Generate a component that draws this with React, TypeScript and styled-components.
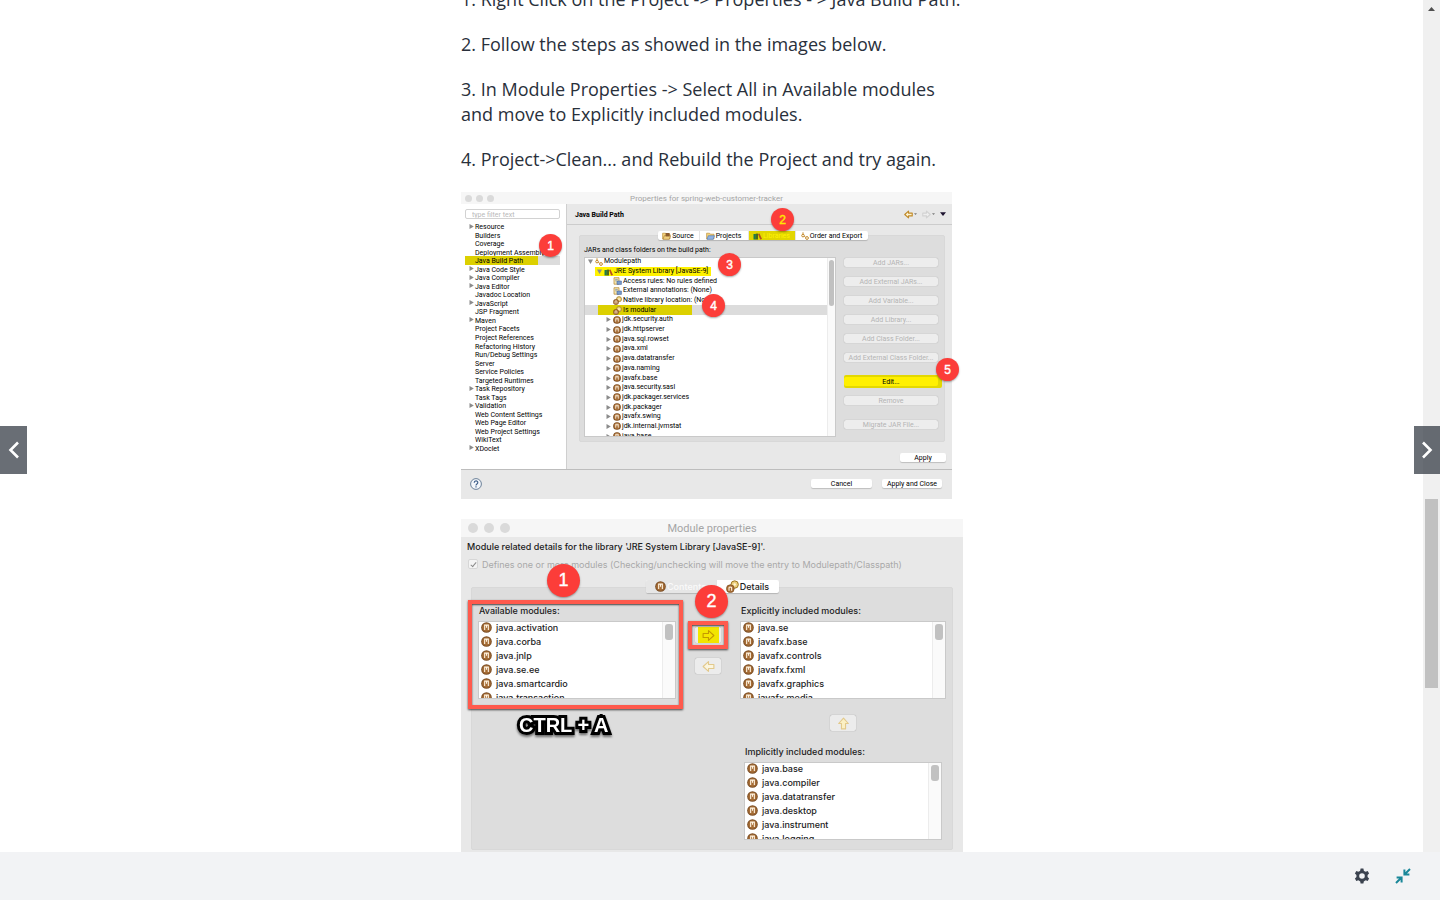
import React from "react";
import styled, { createGlobalStyle, css } from "styled-components";

const GlobalStyle = createGlobalStyle`
  *, *::before, *::after { box-sizing: border-box; }
  body { margin: 0; background: #fff; color: #29303b; font-family: "Open Sans", "Liberation Sans", sans-serif; }
  p, ul, h2, h3 { margin: 0; padding: 0; }
  ul { list-style: none; }
  button, input { font: inherit; color: inherit; margin: 0; padding: 0; border: 0; }
`;

const compactFont = `Roboto, "Liberation Sans", sans-serif`;
const uiFont = `Inter, "Liberation Sans", sans-serif`;

/* ---------- page shell ---------- */

const Shell = styled.div`
  position: relative;
  display: flex;
  flex-direction: column;
  height: 100vh;
  overflow: hidden;
`;

const Viewport = styled.div`
  display: flex;
  flex: 1;
  min-height: 0;
`;

const Reader = styled.main`
  flex: 1;
  min-width: 0;
  overflow: hidden;
`;

const Article = styled.article`
  display: flex;
  flex-direction: column;
  align-items: flex-start;
  gap: 20px;
  max-width: 501px;
  margin: -13px auto 0;
`;

const Step = styled.p`
  font-size: 18px;
  line-height: 25px;
`;

const ScrollTrack = styled.div`
  display: grid;
  grid-template-rows: 499fr 189fr 164fr;
  width: 17px;
  padding: 0 2px;
  background: #f0f0f0;
`;

const ScrollArrow = styled.svg`
  width: 7px;
  height: 4px;
  margin: 7px 3px 0;
`;

const ScrollThumb = styled.div`
  background: #c1c1c1;
`;

const BottomBar = styled.footer`
  display: flex;
  align-items: center;
  justify-content: flex-end;
  gap: 25px;
  height: 48px;
  padding-right: 29px;
  background: #f2f3f5;
`;

const IconButton = styled.button`
  display: flex;
  background: none;
  cursor: pointer;
`;

const PageButton = styled.button<{ $side: "left" | "right" }>`
  position: absolute;
  top: 50%;
  ${(p) => p.$side}: 0;
  transform: translateY(-50%);
  display: flex;
  align-items: center;
  justify-content: center;
  width: ${(p) => (p.$side === "left" ? 27 : 26)}px;
  height: 48px;
  background: rgba(41, 48, 59, 0.7);
  cursor: pointer;
`;

/* ---------- shared dialog parts ---------- */

const Dialog = styled.section<{ $width: number; $compact?: boolean }>`
  position: relative;
  flex: none;
  width: ${(p) => p.$width}px;
  font-family: ${(p) => (p.$compact ? compactFont : uiFont)};
  font-size: ${(p) => (p.$compact ? 7 : 9)}px;
  font-weight: ${(p) => (p.$compact ? 400 : 500)};
  color: ${(p) => (p.$compact ? "#000" : "#1c1c1c")};
  background: #e8e8e8;
`;

const TitleBar = styled.header<{ $large?: boolean }>`
  display: grid;
  grid-template-columns: 1fr auto 1fr;
  align-items: center;
  height: ${(p) => (p.$large ? 18 : 12)}px;
  padding: 0 ${(p) => (p.$large ? 7 : 4)}px;
  background: #f6f6f6;
`;

const DialogTitle = styled.h2<{ $large?: boolean }>`
  padding-top: ${(p) => (p.$large ? 2 : 1)}px;
  font-family: ${compactFont};
  font-size: ${(p) => (p.$large ? 11 : 8)}px;
  line-height: 12px;
  font-weight: 400;
  color: #a5a5a5;
`;

const Lights = styled.div<{ $large?: boolean }>`
  display: flex;
  gap: ${(p) => (p.$large ? 6 : 4)}px;
  i {
    width: ${(p) => (p.$large ? 10 : 7)}px;
    height: ${(p) => (p.$large ? 10 : 7)}px;
    border-radius: 50%;
    background: #dadada;
  }
`;

const Badge = styled.span<{ $x: number; $y: number; $large?: boolean; $yellow?: boolean }>`
  position: absolute;
  left: ${(p) => p.$x}px;
  top: ${(p) => p.$y}px;
  z-index: 3;
  display: flex;
  align-items: center;
  justify-content: center;
  width: ${(p) => (p.$large ? 33 : 23)}px;
  height: ${(p) => (p.$large ? 33 : 23)}px;
  border-radius: 50%;
  background: #fc3d39;
  color: ${(p) => (p.$yellow ? "#ffe800" : "#fff")};
  font: ${(p) => (p.$large ? 18 : 12)}px "Liberation Sans", sans-serif;
  -webkit-text-stroke: 0.4px currentColor;
  box-shadow: 0 1px 2px rgba(0, 0, 0, 0.35);
`;

const GroupBox = styled.div`
  background: #dddddd;
  border: 1px solid #d8d8d8;
  border-radius: 2px;
`;

const Tabs = styled.div<{ $large?: boolean }>`
  position: relative;
  z-index: 1;
  display: flex;
  align-self: center;
  height: ${(p) => (p.$large ? 13 : 9)}px;
  margin-bottom: ${(p) => (p.$large ? -6 : -5)}px;
  border-radius: 2px;
  background: #fff;
  box-shadow: 0 1px 1px rgba(0, 0, 0, 0.18);
`;

const Tab = styled.button<{ $width: number; $tone?: "marked" | "muted" }>`
  display: flex;
  align-items: center;
  justify-content: center;
  gap: 1px;
  width: ${(p) => p.$width}px;
  white-space: nowrap;
  background: none;
  border-right: 1px solid #e4e4e4;
  &:last-child { border-right: 0; }
  ${(p) => p.$tone === "marked" && css`background: #e2d600; color: #fff200;`}
  ${(p) => p.$tone === "muted" && css`background: #e6e6e6; color: #fafafa; border-radius: 2px 0 0 2px;`}
`;

const ListFrame = styled.div<{ $height: number; $bar: number }>`
  display: grid;
  grid-template-columns: 1fr ${(p) => p.$bar}px;
  height: ${(p) => p.$height}px;
  overflow: hidden;
  background: #fff;
  border: 1px solid #c9c9c9;
`;

const ListBar = styled.div<{ $thumb: number }>`
  display: flex;
  justify-content: center;
  padding-top: 2px;
  background: #fafafa;
  border-left: 1px solid #ececec;
  &::after {
    content: "";
    width: 60%;
    height: ${(p) => p.$thumb}px;
    border-radius: 3px;
    background: #c1c1c1;
  }
`;

/* ---------- build path dialog ---------- */

const BuildBody = styled.div`
  display: grid;
  grid-template-columns: 106px 1fr;
  height: 265px;
`;

const Sidebar = styled.nav`
  padding: 5px 6px 0 4px;
  background: #fff;
  border-right: 1px solid #cfcfcf;
`;

const FilterInput = styled.input`
  display: block;
  width: 95px;
  height: 10px;
  padding: 1px 6px 0;
  border: 1px solid #d2d2d2;
  border-radius: 2px;
  background: #fff;
  &::placeholder { color: #b9b9b9; opacity: 1; }
`;

const Categories = styled.ul`
  display: grid;
  grid-auto-rows: 1fr;
  height: 230px;
  margin-top: 3px;
`;

const Category = styled.li<{ $selected?: boolean }>`
  display: grid;
  grid-template-columns: 9px 1fr;
  column-gap: 1px;
  align-items: center;
  justify-items: end;
  line-height: 10px;
  white-space: nowrap;
  span { justify-self: start; height: 8px; }
  ${(p) => p.$selected && css`background: linear-gradient(90deg, #dcd000 0 73px, #dcdcdc 73px);`}
`;

const Settings = styled.div`
  display: flex;
  flex-direction: column;
`;

const SettingsHeader = styled.header`
  display: flex;
  align-items: center;
  justify-content: space-between;
  height: 21px;
  padding: 0 6px 0 8px;
  border-bottom: 1px solid #cccccc;
`;

const SettingsTitle = styled.h3`
  padding-top: 2px;
  font-size: 7px;
  font-weight: 700;
`;

const History = styled.div`
  display: flex;
  align-items: center;
  gap: 5px;
`;

const HistoryStep = styled.button`
  display: flex;
  align-items: center;
  gap: 1px;
  background: none;
`;

const SettingsMain = styled.div`
  display: flex;
  flex-direction: column;
  padding: 6px 6px 0 12px;
`;

const BuildGroup = styled(GroupBox)`
  display: grid;
  grid-template-columns: 252px 94px;
  column-gap: 8px;
  width: 366px;
  padding: 8px 0 4px 4px;
`;

const BuildLabel = styled.p`
  grid-column: 1 / -1;
  height: 13px;
  line-height: 12px;
`;

const Tree = styled.ul`
  display: grid;
  grid-auto-rows: 1fr;
  height: 184px;
  margin-top: -1px;
`;

const TreeRow = styled.li<{ $depth: number; $tone?: "bright" | "dim" }>`
  display: flex;
  align-items: center;
  gap: 1px;
  padding-left: ${(p) => 2 + p.$depth * 9}px;
  line-height: 9px;
  white-space: nowrap;
  ${(p) => p.$tone === "bright" && css`background: linear-gradient(90deg, #fff 10px, #fff200 10px 126px, #fff 126px);`}
  ${(p) => p.$tone === "dim" && css`background: linear-gradient(90deg, #dcdcdc 13px, #dcd000 13px 107px, #dcdcdc 107px);`}
`;

const Twisty = styled.span`
  display: flex;
  justify-content: center;
  width: 7px;
`;

const Actions = styled.div`
  display: flex;
  flex-direction: column;
  gap: 10px;
  padding-top: 1px;
`;

const MacButton = styled.button<{ $width: number; $marked?: boolean; $spaced?: boolean }>`
  width: ${(p) => p.$width}px;
  height: 9px;
  margin-top: ${(p) => (p.$spaced ? 5 : 0)}px;
  line-height: 11px;
  white-space: nowrap;
  border-radius: 2px;
  background: #fff;
  box-shadow: 0 1px 1px rgba(0, 0, 0, 0.18);
  &:disabled { background: #ededed; color: #b4b4b4; box-shadow: 0 0 1px rgba(0, 0, 0, 0.3); }
  ${(p) => p.$marked && css`background: #fff000; box-shadow: 0 -2px #e3d800, 0 2px #e3d800, 4px -2px #e3d800, 4px 2px #e3d800;`}
`;

const ApplyRow = styled.div`
  display: flex;
  justify-content: flex-end;
  padding-top: 11px;
`;

const DialogFooter = styled.footer`
  display: flex;
  align-items: center;
  gap: 10px;
  height: 30px;
  padding: 0 10px 2px 9px;
  border-top: 1px solid #bdbdbd;
`;

const HelpButton = styled.button`
  display: flex;
  margin-right: auto;
  background: none;
`;

/* ---------- module properties dialog ---------- */

const ModuleBody = styled.div`
  display: flex;
  flex-direction: column;
  padding: 4px 10px 40px;
`;

const Intro = styled.p`
  margin-left: -4px;
  line-height: 12px;
  white-space: nowrap;
`;

const CheckRow = styled.label`
  display: flex;
  align-items: center;
  gap: 4px;
  height: 12px;
  margin: 5px 0 10px -3px;
  font-weight: 400;
  color: #a8a8a8;
  white-space: nowrap;
`;

const CheckBox = styled.input`
  appearance: none;
  display: grid;
  place-items: center;
  width: 10px;
  height: 10px;
  border: 1px solid #d6d6d6;
  border-radius: 2px;
  background: #f4f4f4;
  &:checked::after {
    content: "";
    width: 3px;
    height: 6px;
    border: solid #8a8a8a;
    border-width: 0 1px 1px 0;
    transform: rotate(40deg);
  }
`;

const ModuleGroup = styled(GroupBox)`
  display: grid;
  grid-template-columns: 198px 64px 206px;
  padding: 17px 6px 9px;
`;

const ModulePanel = styled.div`
  position: relative;
`;

const PanelLabel = styled.h3`
  height: 16px;
  padding-left: 1px;
  line-height: 12px;
  font-size: 9px;
  font-weight: 500;
`;

const ModuleItems = styled.ul`
  margin-top: -2px;
`;

const ModuleRow = styled.li`
  display: flex;
  align-items: center;
  gap: 4px;
  height: 14px;
  padding-left: 2px;
  white-space: nowrap;
`;

const RedFrame = styled.div<{ $inset: string }>`
  position: absolute;
  inset: ${(p) => p.$inset};
  z-index: 2;
  border: 4px solid #ff5a4d;
  box-shadow: 0 1px 2px rgba(0, 0, 0, 0.7), inset 0 1px 2px rgba(0, 0, 0, 0.7);
  pointer-events: none;
`;

const Movers = styled.div`
  display: flex;
  flex-direction: column;
  align-items: center;
  gap: 15px;
  padding-top: 22px;
`;

const ArrowButton = styled.button<{ $marked?: boolean }>`
  position: relative;
  display: flex;
  align-items: center;
  justify-content: center;
  width: 26px;
  height: 16px;
  border-radius: 2px;
  background: ${(p) => (p.$marked ? "linear-gradient(90deg, #ececec 3px, #f2e500 3px 24px, #ececec 24px)" : "#ececec")};
  box-shadow: 0 0 1px rgba(0, 0, 0, 0.4);
`;

const UpRow = styled.div`
  display: flex;
  justify-content: center;
  padding: 16px 0 15px;
`;

const ImplicitPanel = styled(ModulePanel)`
  padding: 0 4px;
`;

const KeyHint = styled.p`
  padding: 14px 0 0 41px;
  font: bold 20px/24px "Liberation Sans", sans-serif;
  color: #fff;
  -webkit-text-stroke: 6px #000;
  paint-order: stroke fill;
  filter: drop-shadow(0 2px 1px rgba(0, 0, 0, 0.5));
`;

/* ---------- drawings ---------- */

const Triangle = ({ open }: { open?: boolean }) => (
  <svg width="5" height="5" viewBox="0 0 5 5" aria-hidden="true">
    <path d={open ? "M0 0.5h5L2.5 5z" : "M0.5 0v5L4.8 2.5z"} fill="#8b8b8b" />
  </svg>
);

const ModuleIcon = ({ size }: { size: number }) => (
  <svg width={size} height={size} viewBox="0 0 12 12" aria-hidden="true">
    <circle cx="6" cy="6" r="5.8" fill="#7d5027" />
    <circle cx="6" cy="6" r="4.7" fill="#a56c35" />
    <path d="M4 8.6V3.4h4v5.2M6 3.4v3" fill="none" stroke="#fff4e2" strokeWidth="1.2" />
  </svg>
);

const OutlineArrow = ({ turn, color, fill, width = 13 }: { turn: number; color: string; fill: string; width?: number }) => (
  <svg width={width} height={width} viewBox="0 0 14 14" aria-hidden="true">
    <path
      d="M1.2 4.8H7V1.8L12.8 7 7 12.2V9.2H1.2z"
      fill={fill}
      stroke={color}
      strokeWidth={width < 10 ? 1.8 : 1.2}
      strokeLinejoin="round"
      transform={`rotate(${turn} 7 7)`}
    />
  </svg>
);

const Books = () => (
  <svg width="9" height="8" viewBox="0 0 9 8" aria-hidden="true">
    <path d="M0.5 2h2.4v5.5H0.5z" fill="#1f7a4a" />
    <path d="M2.8 1.6H5v5.9H2.8z" fill="#4b6b1a" />
    <path d="M5 2l1.5-.5L9 7l-1.8.6z" fill="#b8501c" />
  </svg>
);

const Folder = ({ brown }: { brown?: boolean }) => (
  <svg width="9" height="8" viewBox="0 0 9 8" aria-hidden="true">
    <path d="M0.6 7V1.2h3l.8 1H8V7z" fill="#f3d27a" stroke="#b5852c" strokeWidth=".6" />
    <path d="M1 7.3l1.3-3.6h6.2L7.2 7.3z" fill={brown ? "#f0cf7c" : "#8fb3e6"} stroke={brown ? "#a5762f" : "#4a74b4"} strokeWidth=".6" />
    {brown && <path d="M3.6 1h4v3.4h-4z" fill="#8a5a2b" />}
  </svg>
);

const Links = () => (
  <svg width="8" height="8" viewBox="0 0 8 8" aria-hidden="true">
    <g fill="#fff" stroke="#c48a2c" strokeWidth="1">
      <path d="M2 .3v2" />
      <circle cx="2" cy="3.6" r="1.3" />
      <path d="M3.2 4.2l1.4 1" />
      <circle cx="6" cy="6" r="1.4" />
    </g>
  </svg>
);

const DocIcon = () => (
  <svg width="9" height="8" viewBox="0 0 9 8" aria-hidden="true">
    <path d="M1 .7h5v6.5H1z" fill="#f6e7b0" stroke="#b5852c" strokeWidth=".7" />
    <path d="M4 4h4.4v3.4H4z" fill="#7b9ccc" stroke="#44659b" strokeWidth=".6" />
    <path d="M2.2 2.4h2.6M2.2 3.8h1.6" stroke="#6d86b0" strokeWidth=".7" />
  </svg>
);

const ModularIcon = ({ size = 9 }: { size?: number }) => (
  <svg width={size} height={size} viewBox="0 0 12 12" aria-hidden="true">
    <circle cx="8" cy="4.2" r="3.4" fill="#ecd07c" stroke="#9b7420" strokeWidth=".9" />
    <circle cx="8" cy="4.2" r="1.1" fill="#fff7dc" />
    <circle cx="4" cy="8" r="3.6" fill="#a86d34" stroke="#7a4d1f" strokeWidth=".6" />
    <path d="M2.8 10V7c0-.6 2.4-.6 2.4 0v3" fill="none" stroke="#fff4e2" strokeWidth="1" />
  </svg>
);

const Caret = ({ dark }: { dark?: boolean }) => (
  <svg width={dark ? 6 : 3} height="4" viewBox="0 0 6 4" aria-hidden="true">
    <path d="M0 .3h6L3 4z" fill={dark ? "#1e1430" : "#7c7c7c"} />
  </svg>
);

const Chevron = ({ dir }: { dir: "left" | "right" }) => (
  <svg width="12" height="18" viewBox="0 0 12 18" aria-hidden="true">
    <path
      d={dir === "left" ? "M10 1.5L2.5 9l7.5 7.5" : "M2 1.5L9.5 9 2 16.5"}
      fill="none"
      stroke="#fff"
      strokeWidth="2.6"
    />
  </svg>
);

const Gear = () => (
  <svg width="16" height="16" viewBox="0 0 16 16" aria-hidden="true">
    <circle cx="8" cy="8" r="4.2" fill="none" stroke="#3c434f" strokeWidth="2.8" />
    {[0, 60, 120, 180, 240, 300].map((a) => (
      <path key={a} d="M6 3.4L6.6.6h2.8L10 3.4z" fill="#3c434f" transform={`rotate(${a} 8 8)`} />
    ))}
  </svg>
);

const Compress = () => (
  <svg width="16" height="16" viewBox="0 0 16 16" aria-hidden="true">
    <g fill="none" stroke="#1a8799" strokeWidth="2">
      <path d="M15 1L10 6M9.4 1.6v5h5" />
      <path d="M1 15l5-5M6.6 14.4v-5h-5" />
    </g>
  </svg>
);

/* ---------- data ---------- */

const categories: [string, boolean?][] = [
  ["Resource", true], ["Builders"], ["Coverage"], ["Deployment Assembly"], ["Java Build Path"],
  ["Java Code Style", true], ["Java Compiler", true], ["Java Editor", true], ["Javadoc Location"],
  ["JavaScript", true], ["JSP Fragment"], ["Maven", true], ["Project Facets"], ["Project References"],
  ["Refactoring History"], ["Run/Debug Settings"], ["Server"], ["Service Policies"], ["Targeted Runtimes"],
  ["Task Repository", true], ["Task Tags"], ["Validation", true], ["Web Content Settings"],
  ["Web Page Editor"], ["Web Project Settings"], ["WikiText"], ["XDoclet", true],
];

const treeModules = [
  "jdk.security.auth", "jdk.httpserver", "java.sql.rowset", "java.xml", "java.datatransfer", "java.naming",
  "javafx.base", "java.security.sasl", "jdk.packager.services", "jdk.packager", "javafx.swing",
  "jdk.internal.jvmstat", "java.base",
];

const actions: { label: string; enabled?: boolean; spaced?: boolean }[] = [
  { label: "Add JARs..." }, { label: "Add External JARs..." }, { label: "Add Variable..." },
  { label: "Add Library..." }, { label: "Add Class Folder..." }, { label: "Add External Class Folder..." },
  { label: "Edit...", enabled: true, spaced: true }, { label: "Remove" }, { label: "Migrate JAR File...", spaced: true },
];

const available = ["java.activation", "java.corba", "java.jnlp", "java.se.ee", "java.smartcardio", "java.transaction"];
const explicit = ["java.se", "javafx.base", "javafx.controls", "javafx.fxml", "javafx.graphics", "javafx.media"];
const implicit = ["java.base", "java.compiler", "java.datatransfer", "java.desktop", "java.instrument", "java.logging"];

const WindowLights = ({ large }: { large?: boolean }) => (
  <Lights $large={large}><i /><i /><i /></Lights>
);

const ModuleList = ({ items }: { items: string[] }) => (
  <ListFrame $height={78} $bar={13}>
    <ModuleItems>
      {items.map((name) => (
        <ModuleRow key={name}><ModuleIcon size={11} />{name}</ModuleRow>
      ))}
    </ModuleItems>
    <ListBar $thumb={16} />
  </ListFrame>
);

const BuildPathDialog = () => (
  <Dialog $width={491} $compact>
    <TitleBar>
      <WindowLights />
      <DialogTitle>Properties for spring-web-customer-tracker</DialogTitle>
    </TitleBar>
    <BuildBody>
      <Sidebar>
        <FilterInput type="text" placeholder="type filter text" aria-label="Filter" />
        <Categories>
          {categories.map(([name, parent]) => (
            <Category key={name} $selected={name === "Java Build Path"}>
              {parent ? <Triangle /> : <i />}
              <span>{name}</span>
            </Category>
          ))}
        </Categories>
      </Sidebar>
      <Settings>
        <SettingsHeader>
          <SettingsTitle>Java Build Path</SettingsTitle>
          <History>
            <HistoryStep aria-label="Back">
              <OutlineArrow turn={180} color="#c08a2a" fill="#fdf3cf" width={9} />
              <Caret />
            </HistoryStep>
            <HistoryStep aria-label="Forward">
              <OutlineArrow turn={0} color="#d2d2d2" fill="#eeeeee" width={9} />
              <Caret />
            </HistoryStep>
            <Caret dark />
          </History>
        </SettingsHeader>
        <SettingsMain>
          <Tabs>
            <Tab $width={42}><Folder brown />Source</Tab>
            <Tab $width={49}><Folder />Projects</Tab>
            <Tab $width={47} $tone="marked"><Books />Libraries</Tab>
            <Tab $width={72}><Links />Order and Export</Tab>
          </Tabs>
          <BuildGroup>
            <BuildLabel>JARs and class folders on the build path:</BuildLabel>
            <ListFrame $height={180} $bar={8}>
              <Tree>
                <TreeRow $depth={0}><Twisty><Triangle open /></Twisty><Links />Modulepath</TreeRow>
                <TreeRow $depth={1} $tone="bright"><Twisty><Triangle open /></Twisty><Books />JRE System Library [JavaSE-9]</TreeRow>
                <TreeRow $depth={2}><Twisty /><DocIcon />Access rules: No rules defined</TreeRow>
                <TreeRow $depth={2}><Twisty /><DocIcon />External annotations: (None)</TreeRow>
                <TreeRow $depth={2}><Twisty /><ModularIcon />Native library location: (None)</TreeRow>
                <TreeRow $depth={2} $tone="dim"><Twisty /><ModularIcon />Is modular</TreeRow>
                {treeModules.map((name) => (
                  <TreeRow key={name} $depth={2}><Twisty><Triangle /></Twisty><ModuleIcon size={8} />{name}</TreeRow>
                ))}
              </Tree>
              <ListBar $thumb={46} />
            </ListFrame>
            <Actions>
              {actions.map((a) => (
                <MacButton key={a.label} $width={94} $marked={a.enabled} $spaced={a.spaced} disabled={!a.enabled}>
                  {a.label}
                </MacButton>
              ))}
            </Actions>
          </BuildGroup>
          <ApplyRow><MacButton $width={46}>Apply</MacButton></ApplyRow>
        </SettingsMain>
      </Settings>
    </BuildBody>
    <DialogFooter>
      <HelpButton aria-label="Help">
        <svg width="12" height="12" viewBox="0 0 12 12" aria-hidden="true">
          <circle cx="6" cy="6" r="5.4" fill="#f3f6fa" stroke="#5d7590" strokeWidth=".9" />
          <path d="M4.2 4.8c0-2.6 3.7-2.4 3.6-.2C7.8 6 6 5.9 6 7.4M6 8.3v1.2" fill="none" stroke="#3f5f8a" strokeWidth="1.2" />
        </svg>
      </HelpButton>
      <MacButton $width={61}>Cancel</MacButton>
      <MacButton $width={60}>Apply and Close</MacButton>
    </DialogFooter>
    <Badge $x={78} $y={42}>1</Badge>
    <Badge $x={310} $y={16} $yellow>2</Badge>
    <Badge $x={257} $y={61}>3</Badge>
    <Badge $x={241} $y={102}>4</Badge>
    <Badge $x={475} $y={166}>5</Badge>
  </Dialog>
);

const ModuleDialog = () => (
  <Dialog $width={502}>
    <TitleBar $large>
      <WindowLights large />
      <DialogTitle $large>Module properties</DialogTitle>
    </TitleBar>
    <ModuleBody>
      <Intro>Module related details for the library 'JRE System Library [JavaSE-9]'.</Intro>
      <CheckRow>
        <CheckBox type="checkbox" defaultChecked disabled />
        Defines one or more modules (Checking/unchecking will move the entry to Modulepath/Classpath)
      </CheckRow>
      <Tabs $large>
        <Tab $width={71} $tone="muted"><ModuleIcon size={11} />Contents</Tab>
        <Tab $width={62}><ModularIcon size={13} />Details</Tab>
      </Tabs>
      <ModuleGroup>
        <div>
          <ModulePanel>
            <PanelLabel>Available modules:</PanelLabel>
            <ModuleList items={available} />
            <RedFrame $inset="-5px -7px -10px -10px" />
          </ModulePanel>
          <KeyHint>CTRL + A</KeyHint>
        </div>
        <Movers>
          <ArrowButton $marked aria-label="Include">
            <OutlineArrow turn={0} color="#c49a00" fill="#f6e600" />
            <RedFrame $inset="-6px -7px" />
          </ArrowButton>
          <ArrowButton aria-label="Exclude">
            <OutlineArrow turn={180} color="#e2c98c" fill="#fbf5df" />
          </ArrowButton>
        </Movers>
        <div>
          <ModulePanel>
            <PanelLabel>Explicitly included modules:</PanelLabel>
            <ModuleList items={explicit} />
          </ModulePanel>
          <UpRow>
            <ArrowButton aria-label="Move up">
              <OutlineArrow turn={-90} color="#e2c98c" fill="#fbf0c4" />
            </ArrowButton>
          </UpRow>
          <ImplicitPanel>
            <PanelLabel>Implicitly included modules:</PanelLabel>
            <ModuleList items={implicit} />
          </ImplicitPanel>
        </div>
      </ModuleGroup>
    </ModuleBody>
    <Badge $large $x={86} $y={45}>1</Badge>
    <Badge $large $x={234} $y={66}>2</Badge>
  </Dialog>
);

export default function App() {
  return (
    <Shell>
      <GlobalStyle />
      <Viewport>
        <Reader>
          <Article>
            <Step>{"1. Right Click on the Project -> Properties - > Java Build Path."}</Step>
            <Step>2. Follow the steps as showed in the images below.</Step>
            <Step>{"3. In Module Properties -> Select All in Available modules and move to Explicitly included modules."}</Step>
            <Step>{"4. Project->Clean... and Rebuild the Project and try again."}</Step>
            <BuildPathDialog />
            <ModuleDialog />
          </Article>
        </Reader>
        <ScrollTrack>
          <ScrollArrow viewBox="0 0 7 4" aria-hidden="true"><path d="M0 4h7L3.5 0z" fill="#505050" /></ScrollArrow>
          <ScrollThumb />
        </ScrollTrack>
      </Viewport>
      <BottomBar>
        <IconButton aria-label="Settings"><Gear /></IconButton>
        <IconButton aria-label="Exit fullscreen"><Compress /></IconButton>
      </BottomBar>
      <PageButton $side="left" aria-label="Previous"><Chevron dir="left" /></PageButton>
      <PageButton $side="right" aria-label="Next"><Chevron dir="right" /></PageButton>
    </Shell>
  );
}
